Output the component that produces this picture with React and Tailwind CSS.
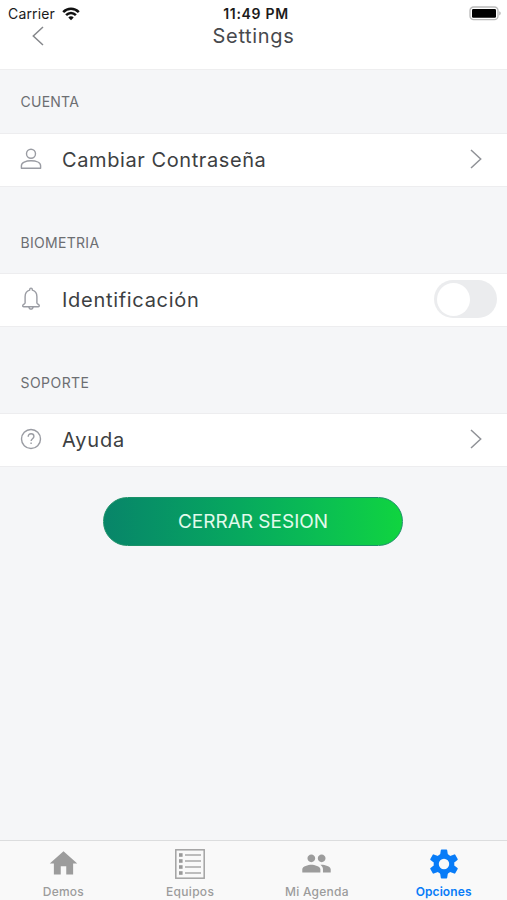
import { useState } from 'react';
import clsx from 'clsx';
import { MdHome, MdPeople } from 'react-icons/md';

const WifiIcon = () => (
    <svg width="18" height="14" viewBox="0 0 18 14" fill="none" stroke="#111" strokeWidth="2.5">
        <path d="M1.2 5.2C5.6.7 12.4.7 16.8 5.2" />
        <path d="M4.1 8.2c2.8-2.9 7-2.9 9.8 0" />
        <path d="M9 13.2 6.3 10.4c1.5-1.5 3.9-1.5 5.4 0z" fill="#111" stroke="none" />
    </svg>
);

const BatteryIcon = () => (
    <svg width="33" height="15" viewBox="0 0 33 15" fill="none">
        <rect x="1" y="1" width="28" height="12.6" rx="3.6" stroke="#b9b9b9" strokeWidth="1.3" />
        <rect x="3" y="3" width="24" height="8.8" rx="1.2" fill="#000" />
        <path d="M30.4 5.2c1.6.6 1.6 3.6 0 4.2z" fill="#a5a5a5" />
    </svg>
);

const Chevron = ({ className }) => (
    <svg width="12" height="20" viewBox="0 0 12 20" fill="none" stroke="currentColor" strokeWidth="1.5" className={className}>
        <path d="M1 1l9.7 9L1 19" />
    </svg>
);

const UserIcon = () => (
    <svg width="22" height="22" viewBox="0 0 22 22" fill="none" stroke="currentColor" strokeWidth="1.4">
        <circle cx="11" cy="5.8" r="4.5" />
        <path d="M1.4 20.3v-2.5c0-3.2 4.3-5 9.6-5s9.6 1.8 9.6 5v2.5z" strokeLinejoin="round" />
    </svg>
);

const BellIcon = () => (
    <svg width="22" height="24" viewBox="0 0 22 24" fill="none" stroke="currentColor" strokeWidth="1.4" strokeLinejoin="round">
        <path d="M9.7 3.1V2.4a1.3 1.3 0 0 1 2.6 0v.7c3.1.7 4.6 3.2 4.6 6.6v6.2c0 1 2.4 1.4 2.4 2.8 0 .6-.4 1-1 1H3.7c-.6 0-1-.4-1-1 0-1.4 2.4-1.8 2.4-2.8V9.7c0-3.4 1.5-5.9 4.6-6.6z" />
        <path d="M8.9 19.9c.2 1.5 1 2.2 2.1 2.2s1.9-.7 2.1-2.2" />
    </svg>
);

const HelpIcon = () => (
    <svg width="22" height="22" viewBox="0 0 22 22" fill="none" stroke="currentColor" strokeWidth="1.4">
        <circle cx="11" cy="11" r="9.5" />
        <path d="M8.2 8.8c0-1.9 1.2-3 2.9-3s2.8 1.1 2.8 2.6c0 2.3-2.8 2.3-2.8 4.6" />
        <path d="M11.1 14.6v1.5" />
    </svg>
);

const ListIcon = () => (
    <svg width="30" height="30" viewBox="0 0 30 30" fill="none">
        <rect x=".8" y=".8" width="28.4" height="28.4" stroke="#a3a3a3" strokeWidth="1.5" />
        {[6, 12, 18, 24].map((y) => (
            <g key={y}>
                <rect x="4" y={y - 1.8} width="3.6" height="3.6" fill="#999" />
                <path d={`M10 ${y}h16`} stroke="#a3a3a3" strokeWidth="1.4" />
            </g>
        ))}
    </svg>
);

const GearIcon = () => (
    <svg width="30" height="30" viewBox="-15 -15 30 30" fill="currentColor">
        <circle r="7.8" fill="none" stroke="currentColor" strokeWidth="5.2" />
        {[0, 60, 120, 180, 240, 300].map((angle) => (
            <path key={angle} d="M-4-8.5l.8-5.2q.1-.7.8-.7h4.8q.7 0 .8.7l.8 5.2z" transform={`rotate(${angle})`} />
        ))}
    </svg>
);

const SectionTitle = ({ children, className }) => (
    <h2 className={clsx('flex items-end pl-[20.5px] text-[14px] leading-5 text-[#6c6e72]', className)}>
        {children}
    </h2>
);

const Row = ({ icon, label, labelClass, children }) => (
    <div className="flex h-[54px] items-center border-y border-[#ededef] bg-white pb-[2px] pl-[20px]">
        <span className="flex w-[22px] justify-center text-[#9a9ca3]">{icon}</span>
        <span className={clsx('ml-5 pt-[2px] text-[20px] leading-6 text-[#3d3f42]', labelClass)}>{label}</span>
        <div className="ml-auto">{children}</div>
    </div>
);

const Tab = ({ icon, label, active, labelClass }) => (
    <button className={clsx('flex flex-1 flex-col items-center pt-[6px]', active ? 'text-[#087cf8]' : 'text-[#9c9c9c]')}>
        <span className="flex h-[34px] items-center justify-center">{icon}</span>
        <span className={clsx('mt-1 text-[12px] leading-4', labelClass)}>{label}</span>
    </button>
);

const App = () => {
    const [biometric, setBiometric] = useState(false);

    return (
        <div className="flex h-[900px] w-full flex-col overflow-hidden bg-[#f5f6f8] font-['Inter',sans-serif]">
            <header className="h-[70px] border-b border-[#eeeeef] bg-white">
                <div className="grid h-[26px] grid-cols-3 items-center pl-[8px] pr-[5px] pt-px text-[#1b1b1b]">
                    <div className="flex items-center gap-[7px] text-[14px] leading-5">
                        <span className="tracking-[0.15px]">Carrier</span>
                        <WifiIcon />
                    </div>
                    <span className="pl-[2px] text-center text-[14px] font-semibold leading-5 tracking-[0.7px]">11:49 PM</span>
                    <div className="flex justify-end">
                        <BatteryIcon />
                    </div>
                </div>
                <div className="grid h-[17px] grid-cols-3 items-center">
                    <Chevron className="ml-8 rotate-180 text-[#85878b]" />
                    <h1 className="text-center text-[20px] leading-5 tracking-[0.65px] text-[#47494d]">Settings</h1>
                </div>
            </header>

            <main className="flex-1">
                <SectionTitle className="h-[63px] pb-[21px] tracking-[0.25px]">CUENTA</SectionTitle>
                <Row icon={<UserIcon />} label="Cambiar Contraseña" labelClass="tracking-[0.59px]">
                    <Chevron className="mr-[25px] text-[#909297]" />
                </Row>

                <SectionTitle className="h-[86px] pb-[20px] tracking-[0.3px]">BIOMETRIA</SectionTitle>
                <Row icon={<BellIcon />} label="Identificación" labelClass="tracking-[0.7px]">
                    <button
                        role="switch"
                        aria-checked={biometric}
                        onClick={() => setBiometric(!biometric)}
                        className={clsx('mr-[10px] flex h-[38px] w-[63px] items-center rounded-full px-[3px]', biometric ? 'justify-end bg-[#0fc848]' : 'bg-[#ebecee]')}
                    >
                        <span className="size-[33px] rounded-full bg-white"></span>
                    </button>
                </Row>

                <SectionTitle className="h-[86px] pb-[20px] tracking-[0.45px]">SOPORTE</SectionTitle>
                <Row icon={<HelpIcon />} label="Ayuda" labelClass="tracking-[0.8px]">
                    <Chevron className="mr-[25px] text-[#909297]" />
                </Row>

                <button className="ml-[103px] mt-[30px] flex h-[49px] w-[300px] items-center justify-center rounded-full border border-[#1b9168] bg-linear-to-r from-[#088569] to-[#10d43f] pt-[2px] text-[19px] text-[#e2faec]">
                    CERRAR SESION
                </button>
            </main>

            <nav className="flex h-[60px] border-t border-[#dcddde] bg-[#f9f9f9]">
                <Tab icon={<MdHome size={33} />} label="Demos" labelClass="font-medium tracking-[0.2px]" />
                <Tab icon={<ListIcon />} label="Equipos" labelClass="font-medium tracking-[0.3px]" />
                <Tab icon={<MdPeople size={31} />} label="Mi Agenda" labelClass="font-medium tracking-[0.25px]" />
                <Tab icon={<GearIcon />} label="Opciones" labelClass="font-semibold tracking-[0.1px]" active />
            </nav>
        </div>
    );
};

export default App;
